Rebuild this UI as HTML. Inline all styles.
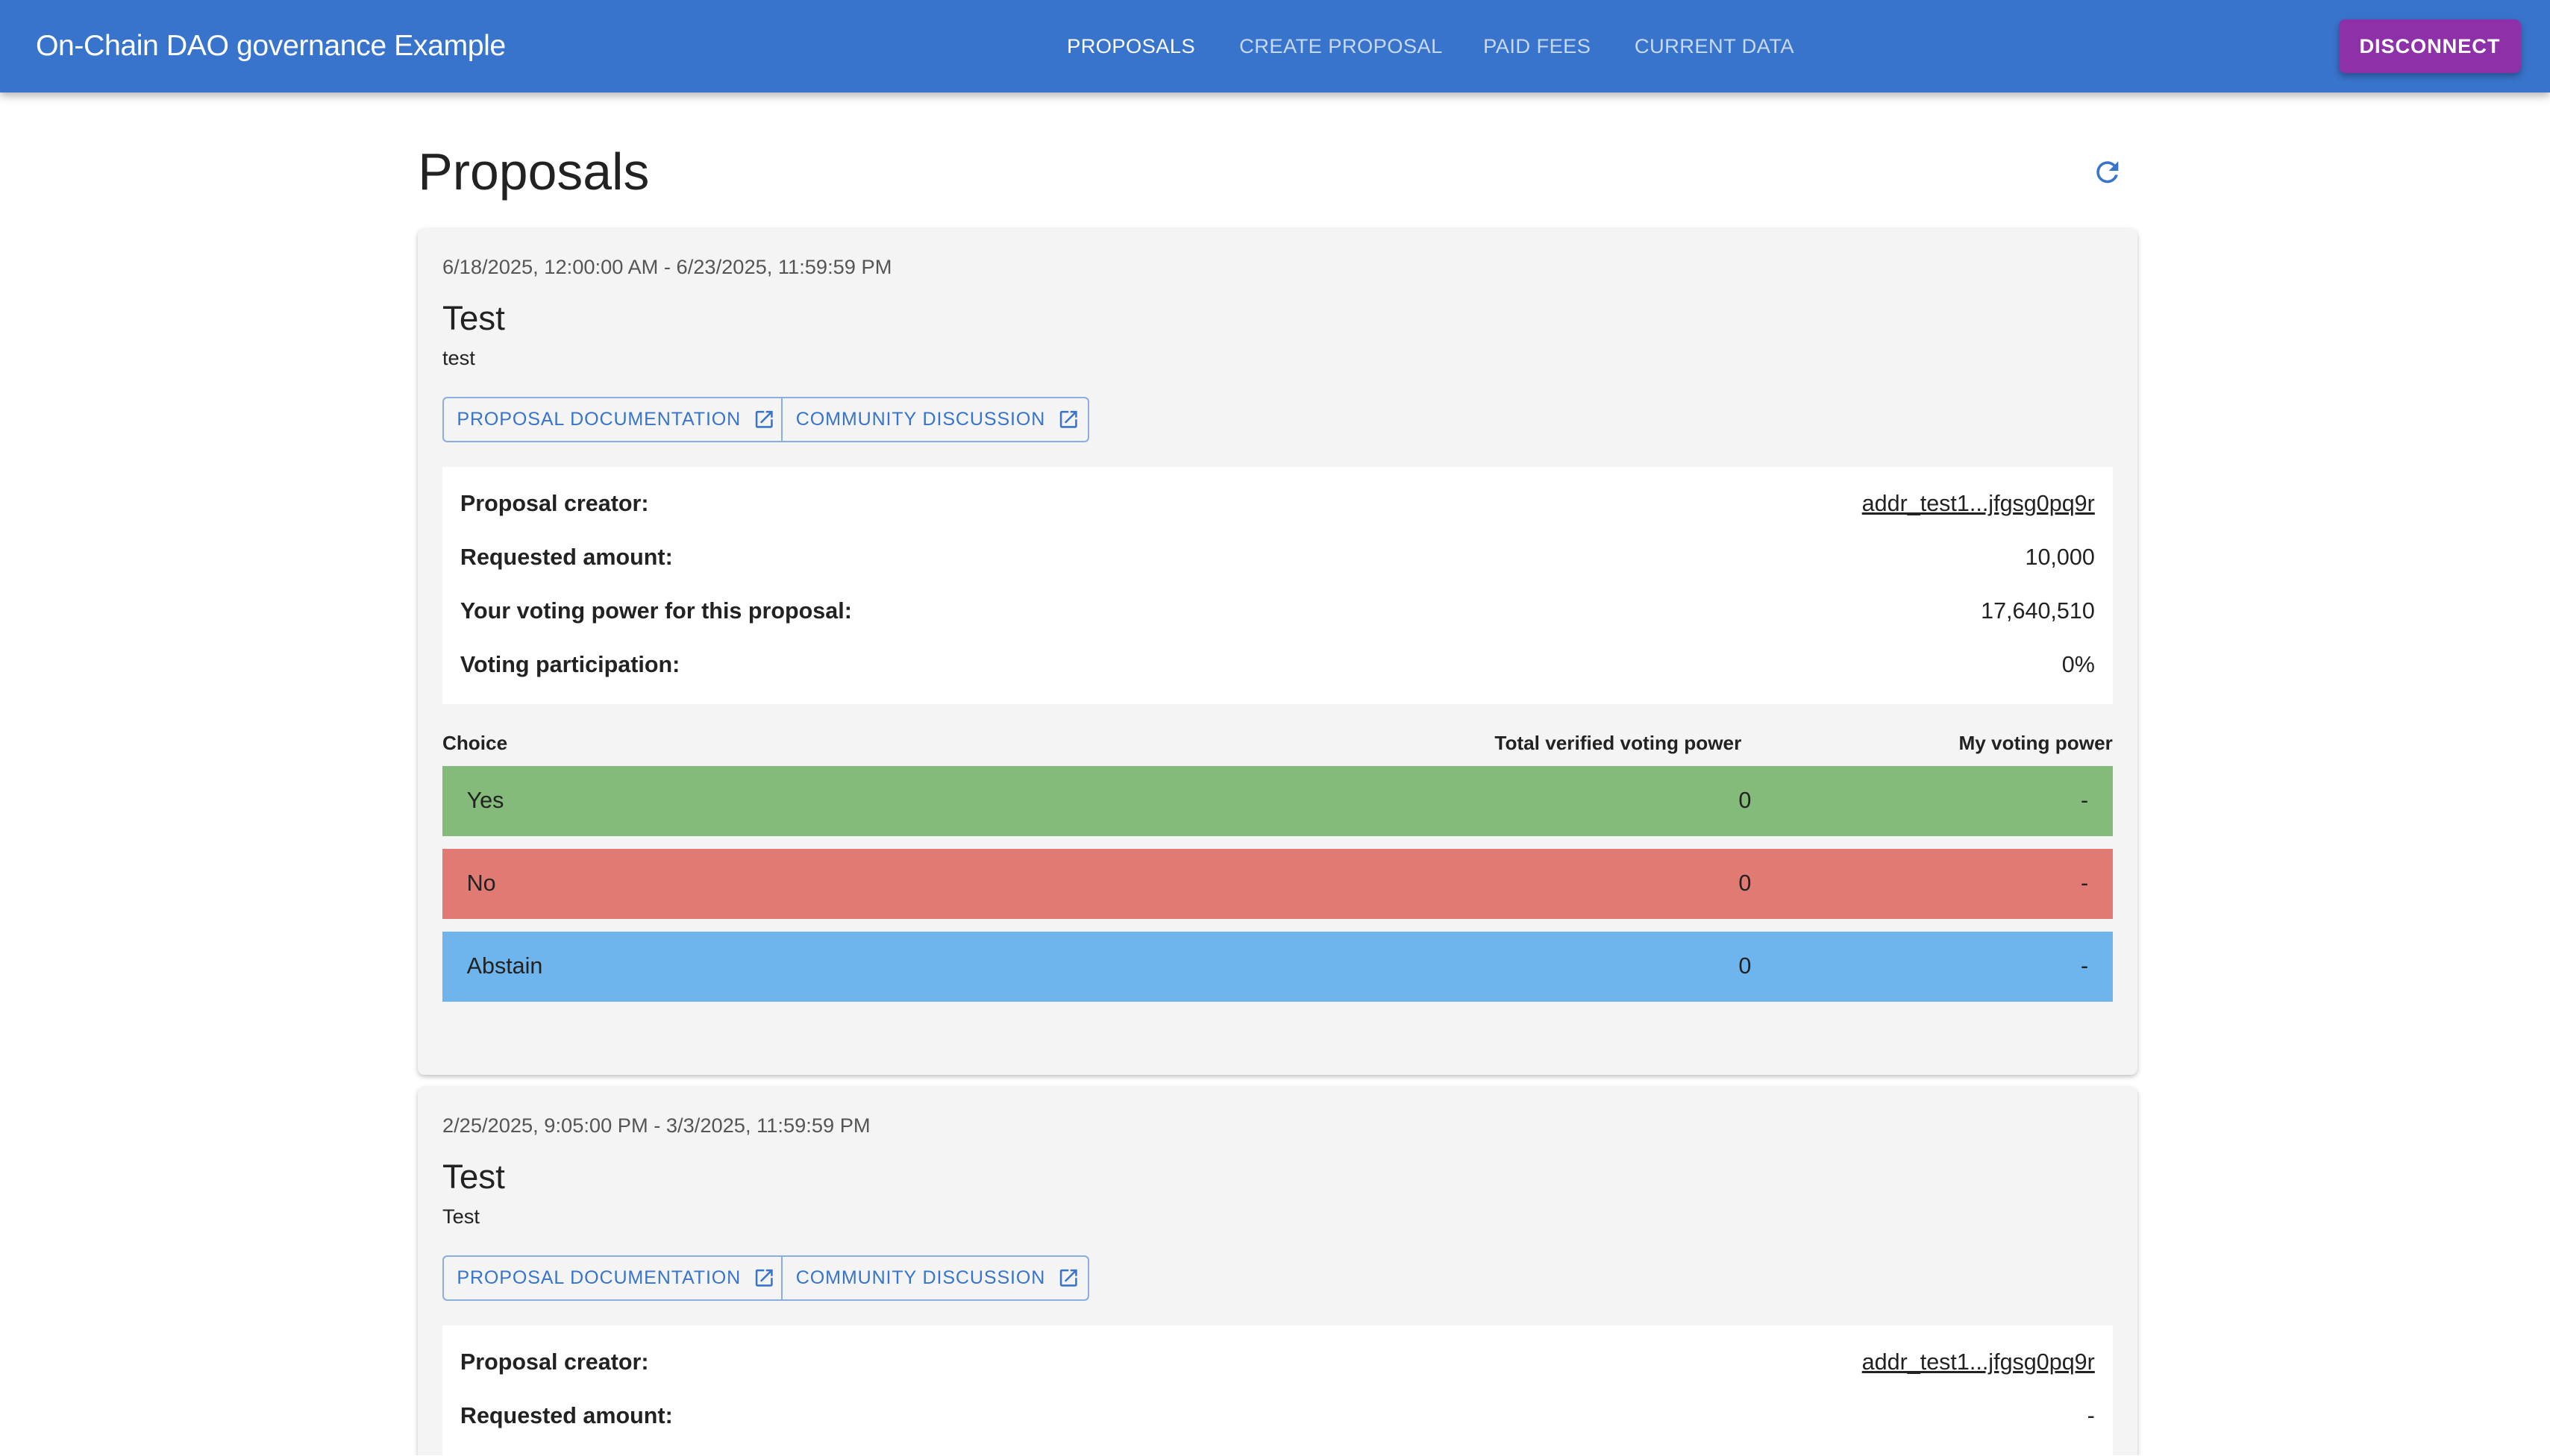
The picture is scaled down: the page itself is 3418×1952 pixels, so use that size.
<!DOCTYPE html>
<html><head><meta charset="utf-8">
<style>
html,body{margin:0;padding:0;background:#fff;overflow:hidden}
body{width:3418px;height:1952px;font-family:"Liberation Sans",Arial,sans-serif;color:#222}
#root{zoom:2.18;width:1568px;height:895px;position:relative;overflow:hidden}
.hdr{position:absolute;left:0;top:0;width:1568px;height:57px;background:#3874cb;box-shadow:0 2px 5px rgba(0,0,0,.3)}
.title{position:absolute;left:22px;top:18px;font-size:18px;color:#fff;font-weight:500;letter-spacing:-0.2px}
.nav{position:absolute;top:21px;font-size:12.5px;letter-spacing:.2px;color:rgba(255,255,255,.72)}
.btn{position:absolute;left:1438px;top:12px;width:112px;height:33px;background:#8e30a8;border-radius:4px;color:#fff;font-size:12.5px;letter-spacing:.4px;text-align:center;line-height:33px;font-weight:bold;box-shadow:0 2px 4px rgba(0,0,0,.3)}
h1{position:absolute;left:257px;top:87px;margin:0;font-weight:normal;font-size:32px;color:#222}
.card{position:absolute;left:257px;width:1057px;background:#f4f4f4;border-radius:4px;box-shadow:0 1px 3px rgba(0,0,0,.25)}
.abs{position:absolute}
.date{left:15px;font-size:12.5px;color:#555}
.tt{left:15px;font-size:21px;color:#222}
.sub{left:15px;font-size:12.5px}
.links{left:15px;width:396px;height:26px;border:1px solid #8aaee0;border-radius:3px;display:flex}
.links div{font-size:11.5px;color:#3874cb;letter-spacing:.4px;line-height:26px;padding-left:8px;display:flex;align-items:center}
.det{left:15px;width:1027px;background:#fff}
.row{position:absolute;left:11px;right:11px;font-size:14px}
.row b{font-weight:bold}
.row span{position:absolute;right:0;top:0}
.th{font-size:12px;font-weight:bold;color:#222}
.vr{left:15px;width:1027px;height:43px;font-size:14px;line-height:43px}
</style></head><body><div id="root">
<div class="hdr">
<div class="title">On-Chain DAO governance Example</div>
<div class="nav" style="left:656px;color:#fff">PROPOSALS</div>
<div class="nav" style="left:762px">CREATE PROPOSAL</div>
<div class="nav" style="left:912px">PAID FEES</div>
<div class="nav" style="left:1005px">CURRENT DATA</div>
<div class="btn">DISCONNECT</div>
</div>
<h1>Proposals</h1>
<svg class="abs" style="left:1286px;top:96px" width="20" height="20" viewBox="0 0 24 24"><path fill="#3874cb" d="M17.65 6.35A7.958 7.958 0 0 0 12 4a8 8 0 1 0 7.730 10h-2.08A6 6 0 1 1 12 6c1.66 0 3.14.69 4.22 1.78L13 11h7V4l-2.35 2.35z"/></svg>

<div class="card" style="top:141px;height:520px">
<div class="abs date" style="top:16px">6/18/2025, 12:00:00 AM - 6/23/2025, 11:59:59 PM</div>
<div class="abs tt" style="top:43px">Test</div>
<div class="abs sub" style="top:72px">test</div>
<div class="abs links" style="top:103px">
<div style="width:200px;border-right:1px solid #8aaee0">PROPOSAL DOCUMENTATION&nbsp;&nbsp;<svg width="14" height="14" viewBox="0 0 24 24"><path fill="#3874cb" d="M19 19H5V5h7V3H5a2 2 0 0 0-2 2v14a2 2 0 0 0 2 2h14c1.1 0 2-.9 2-2v-7h-2v7zM14 3v2h3.59l-9.83 9.830 1.41 1.41L19 6.41V10h2V3h-7z"/></svg></div>
<div style="width:180px">COMMUNITY DISCUSSION&nbsp;&nbsp;<svg width="14" height="14" viewBox="0 0 24 24"><path fill="#3874cb" d="M19 19H5V5h7V3H5a2 2 0 0 0-2 2v14a2 2 0 0 0 2 2h14c1.1 0 2-.9 2-2v-7h-2v7zM14 3v2h3.59l-9.83 9.830 1.41 1.41L19 6.41V10h2V3h-7z"/></svg></div>
</div>
<div class="abs det" style="top:146px;height:146px">
<div class="row" style="top:15px"><b>Proposal creator:</b><span style="text-decoration:underline">addr_test1...jfgsg0pq9r</span></div>
<div class="row" style="top:48px"><b>Requested amount:</b><span>10,000</span></div>
<div class="row" style="top:81px"><b>Your voting power for this proposal:</b><span>17,640,510</span></div>
<div class="row" style="top:114px"><b>Voting participation:</b><span>0%</span></div>
</div>
<div class="abs th" style="left:15px;top:309px">Choice</div>
<div class="abs th" style="left:662px;top:309px">Total verified voting power</div>
<div class="abs th" style="right:15px;top:309px">My voting power</div>
<div class="abs vr" style="top:330px;background:#84ba7a"><span style="position:absolute;left:15px">Yes</span><span style="position:absolute;left:797px">0</span><span style="position:absolute;right:15px">-</span></div>
<div class="abs vr" style="top:381px;background:#e27a74"><span style="position:absolute;left:15px">No</span><span style="position:absolute;left:797px">0</span><span style="position:absolute;right:15px">-</span></div>
<div class="abs vr" style="top:432px;background:#6db5ec"><span style="position:absolute;left:15px">Abstain</span><span style="position:absolute;left:797px">0</span><span style="position:absolute;right:15px">-</span></div>
</div>

<div class="card" style="top:669px;height:226px;border-radius:4px 4px 0 0">
<div class="abs date" style="top:16px">2/25/2025, 9:05:00 PM - 3/3/2025, 11:59:59 PM</div>
<div class="abs tt" style="top:43px">Test</div>
<div class="abs sub" style="top:72px">Test</div>
<div class="abs links" style="top:103px">
<div style="width:200px;border-right:1px solid #8aaee0">PROPOSAL DOCUMENTATION&nbsp;&nbsp;<svg width="14" height="14" viewBox="0 0 24 24"><path fill="#3874cb" d="M19 19H5V5h7V3H5a2 2 0 0 0-2 2v14a2 2 0 0 0 2 2h14c1.1 0 2-.9 2-2v-7h-2v7zM14 3v2h3.59l-9.83 9.830 1.41 1.41L19 6.41V10h2V3h-7z"/></svg></div>
<div style="width:180px">COMMUNITY DISCUSSION&nbsp;&nbsp;<svg width="14" height="14" viewBox="0 0 24 24"><path fill="#3874cb" d="M19 19H5V5h7V3H5a2 2 0 0 0-2 2v14a2 2 0 0 0 2 2h14c1.1 0 2-.9 2-2v-7h-2v7zM14 3v2h3.59l-9.83 9.830 1.41 1.41L19 6.41V10h2V3h-7z"/></svg></div>
</div>
<div class="abs det" style="top:146px;height:80px">
<div class="row" style="top:15px"><b>Proposal creator:</b><span style="text-decoration:underline">addr_test1...jfgsg0pq9r</span></div>
<div class="row" style="top:48px"><b>Requested amount:</b><span>-</span></div>
</div>
</div>
</div></body></html>
